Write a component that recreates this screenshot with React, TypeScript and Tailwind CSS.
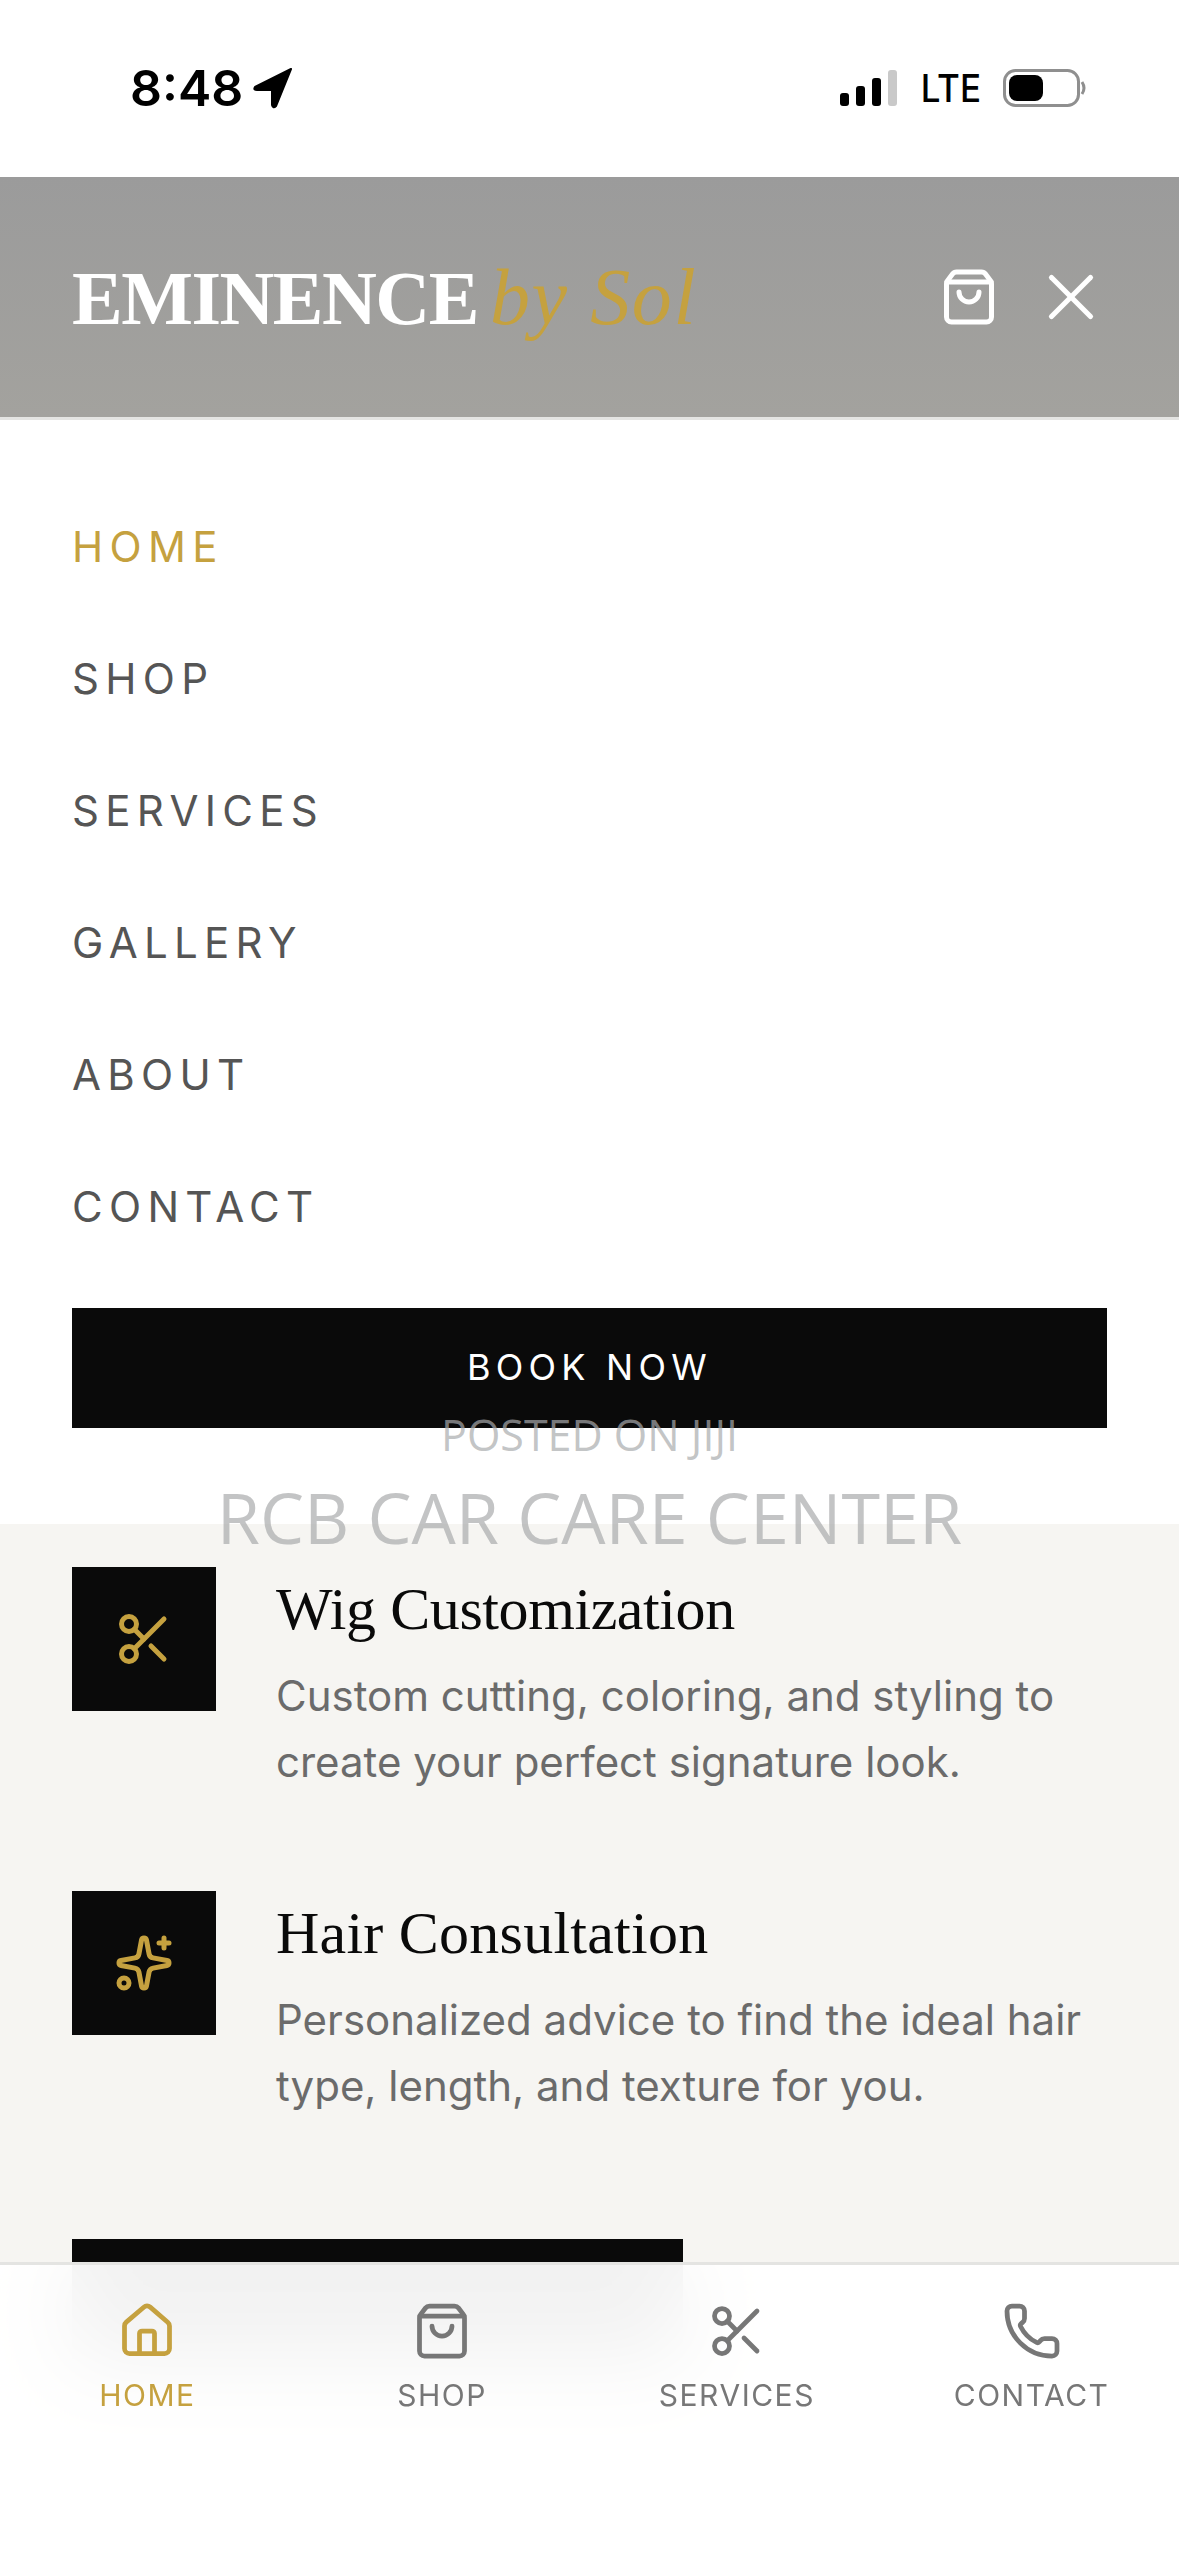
import { House, Phone, Scissors, ShoppingBag, Sparkles, X } from "lucide-react";

const navItems = ["HOME", "SHOP", "SERVICES", "GALLERY", "ABOUT", "CONTACT"];

const services = [
  {
    title: "Wig Customization",
    titleClass: "tracking-[-0.007em]",
    lines: ["Custom cutting, coloring, and styling to", "create your perfect signature look."],
    Icon: Scissors,
  },
  {
    title: "Hair Consultation",
    titleClass: "tracking-[0.004em]",
    lines: ["Personalized advice to find the ideal hair", "type, length, and texture for you."],
    Icon: Sparkles,
  },
];

const tabs = [
  { label: "HOME", Icon: House, active: true },
  { label: "SHOP", Icon: ShoppingBag, active: false },
  { label: "SERVICES", Icon: Scissors, active: false },
  { label: "CONTACT", Icon: Phone, active: false },
];

function StatusBar() {
  return (
    <div className="flex h-[177px] items-center justify-between bg-white pb-[2px] pl-[130px] pr-[92px] font-['Inter',sans-serif] text-black">
      <div className="flex items-center gap-[10px]">
        <span className="text-[50px] font-semibold leading-none">8:48</span>
        <svg width="40" height="42" viewBox="0 0 40 42" aria-hidden="true">
          <path d="M38 2 L2 20 Q0 23 4 23 L19 23 L19 38 Q20 42 23 39 Z" fill="black" stroke="black" strokeWidth="2" strokeLinejoin="round" />
        </svg>
      </div>
      <div className="flex items-center gap-[22px]">
        <svg width="58" height="38" viewBox="0 0 58 38" aria-hidden="true">
          <rect x="0" y="24" width="9" height="13" rx="3" fill="black" />
          <rect x="16" y="17" width="9" height="20" rx="3" fill="black" />
          <rect x="32" y="9" width="9" height="28" rx="3" fill="black" />
          <rect x="48" y="1" width="9" height="36" rx="3" fill="#c9c9c9" />
        </svg>
        <span className="-ml-[2px] text-[38px] font-medium leading-none [transform:scaleX(0.92)]">LTE</span>
        <svg className="-ml-[3px]" width="84" height="38" viewBox="0 0 84 38" aria-hidden="true">
          <rect x="1.5" y="1.5" width="74" height="35" rx="11" fill="none" stroke="#8f8f8f" strokeWidth="3" />
          <rect x="6" y="6" width="34" height="26" rx="8" fill="black" />
          <path d="M79 13 Q83 19 79 25" fill="none" stroke="#8f8f8f" strokeWidth="3" />
        </svg>
      </div>
    </div>
  );
}

function Header() {
  return (
    <header className="flex h-[243px] items-center justify-between border-b-[3px] border-[#e4e4e2] bg-gradient-to-b from-[#9b9b9b] to-[#a3a29e] pl-[72px] pr-[69px]">
      <div className="flex items-baseline gap-[12px] font-['Liberation_Serif',serif] leading-none">
        <span className="text-[76px] font-bold tracking-[-0.02em] text-white">EMINENCE</span>
        <span className="text-[80px] italic tracking-[0.02em] text-[#c5a13f]">by Sol</span>
      </div>
      <div className="flex items-center gap-[33px] text-white">
        <ShoppingBag size={60} strokeWidth={2} />
        <X size={78} strokeWidth={1.6} />
      </div>
    </header>
  );
}

function Menu() {
  return (
    <nav className="bg-white px-[72px] pb-[96px] pt-[60px] font-['Inter',sans-serif]">
      <ul>
        {navItems.map((item, i) => (
          <li
            key={item}
            className={`flex h-[132px] items-center text-[42px] tracking-[0.15em] ${i === 0 ? "text-[#c5a13f]" : "text-[#555555]"}`}
          >
            {item}
          </li>
        ))}
      </ul>
      <button className="mt-[36px] flex h-[120px] w-full items-center justify-center bg-[#0a0a0a] pb-[2px] text-[36px] tracking-[0.145em] text-white">
        BOOK NOW
      </button>
    </nav>
  );
}

function Services() {
  return (
    <section className="h-[1032px] overflow-hidden bg-[#f6f5f2] px-[72px] pt-[43px]">
      <div className="flex flex-col gap-[96px]">
        {services.map(({ title, titleClass, lines, Icon }) => (
          <div key={title} className="flex gap-[60px]">
            <div className="flex h-[144px] w-[144px] shrink-0 items-center justify-center bg-[#0a0a0a] text-[#c5a13f]">
              <Icon size={60} strokeWidth={2} />
            </div>
            <div>
              <h3 className={`font-['Liberation_Serif',serif] text-[60px] leading-[84px] text-[#0a0a0a] ${titleClass}`}>{title}</h3>
              <p className="mt-[12px] font-['Inter',sans-serif] text-[42px] leading-[66px] text-[#6b6b6b]">
                {lines[0]}
                <br />
                {lines[1]}
              </p>
            </div>
          </div>
        ))}
      </div>
      <div className="mt-[120px] h-[120px] w-[611px] bg-[#0a0a0a]" />
    </section>
  );
}

function TabBar() {
  return (
    <nav className="absolute bottom-0 left-0 right-0 grid h-[294px] grid-cols-4 border-t-[3px] border-[#e4e4e2] bg-white/95 pt-[36px] font-['Inter',sans-serif] backdrop-blur-2xl">
      {tabs.map(({ label, Icon, active }) => (
        <div
          key={label}
          className={`flex flex-col items-center gap-[16px] ${active ? "text-[#c5a13f]" : "text-[#777777]"}`}
        >
          <Icon size={60} strokeWidth={1.9} />
          <span className="text-[30px] leading-[36px] tracking-[0.05em]">{label}</span>
        </div>
      ))}
    </nav>
  );
}

export default function App() {
  return (
    <div className="relative h-[2556px] w-[1179px] overflow-hidden bg-white">
      <StatusBar />
      <Header />
      <Menu />
      <Services />
      <TabBar />
      <div className="absolute left-0 right-0 top-[1408px] flex flex-col items-center font-['Open_Sans',sans-serif] text-[#a9abad]/70">
        <span className="text-[43px] leading-[54px]">POSTED ON JIJI</span>
        <span className="mt-[7px] text-[70px] leading-[96px]">RCB CAR CARE CENTER</span>
      </div>
    </div>
  );
}
